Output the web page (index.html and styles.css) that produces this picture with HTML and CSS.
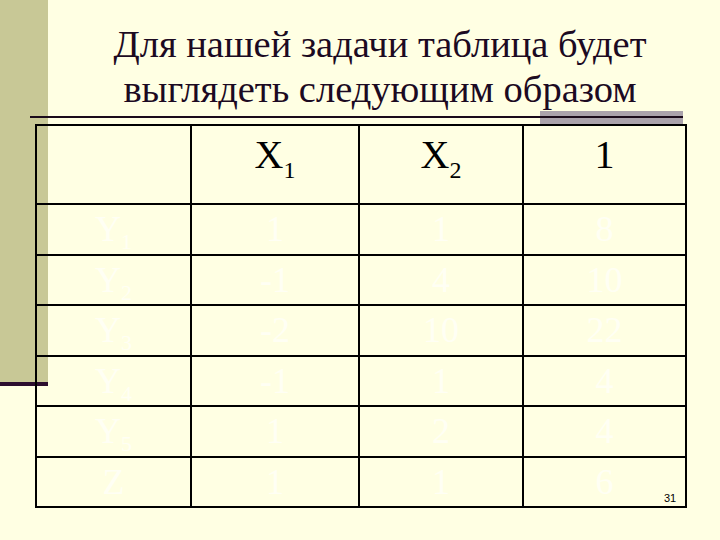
FILE: index.html
```html
<!DOCTYPE html>
<html lang="ru">
<head>
<meta charset="utf-8">
<title>Слайд 31</title>
<link rel="stylesheet" href="styles.css">
</head>
<body>
<div class="slide">
  <h1 class="title">Для нашей задачи таблица будет<br>выглядеть следующим образом</h1>
  <div class="rule"></div>
  <table class="grid">
    <colgroup>
      <col class="c0"><col class="c1"><col class="c2"><col class="c3">
    </colgroup>
    <thead>
      <tr class="head">
        <th></th>
        <th>X<sub>1</sub></th>
        <th>X<sub>2</sub></th>
        <th>1</th>
      </tr>
    </thead>
    <tbody>
      <tr><td>Y<sub>1</sub></td><td>1</td><td>1</td><td>8</td></tr>
      <tr><td>Y<sub>2</sub></td><td>-1</td><td>4</td><td>10</td></tr>
      <tr><td>Y<sub>3</sub></td><td>-2</td><td>10</td><td>22</td></tr>
      <tr><td>Y<sub>4</sub></td><td>-1</td><td>1</td><td>4</td></tr>
      <tr><td>Y<sub>5</sub></td><td>1</td><td>2</td><td>4</td></tr>
      <tr><td>Z</td><td>1</td><td>1</td><td>6</td></tr>
    </tbody>
  </table>
  <div class="pagenum">31</div>
</div>
</body>
</html>
```
FILE: styles.css
```css
html, body {
  margin: 0;
  padding: 0;
}
body {
  background: #ffffe3;
}
.slide {
  position: relative;
  z-index: 0;
  width: 720px;
  height: 540px;
  overflow: hidden;
  box-sizing: border-box;
  padding-top: 22px;
  background:
    linear-gradient(#c8c896, #c8c896) 0 0 / 48px 382px no-repeat,
    linear-gradient(#2c0d2e, #2c0d2e) 0 382px / 48px 4px no-repeat,
    #ffffe3;
  font-family: "Liberation Serif", "DejaVu Serif", serif;
}
.title {
  margin: 0;
  padding: 0 8px 0 48px;
  text-align: center;
  font-family: "Liberation Serif", "DejaVu Serif", serif;
  font-weight: normal;
  font-size: 38.5px;
  line-height: 45px;
  color: #1c0a22;
}
.rule {
  position: relative;
  margin: 4px 0 0 30px;
  width: 653px;
  height: 2px;
  background: #1a0a1a;
}
.rule::after {
  content: "";
  position: absolute;
  left: 510px;
  top: -5px;
  width: 143px;
  height: 13px;
  background: #aaa2ab;
  z-index: -1;
}
.grid {
  margin: 6px 0 0 35px;
  border-collapse: collapse;
  table-layout: fixed;
  width: 650px;
  font-family: "Liberation Serif", "DejaVu Serif", serif;
}
.c0 { width: 155px; }
.c1 { width: 168px; }
.c2 { width: 164px; }
.c3 { width: 163px; }
.grid th, .grid td {
  border: 2.5px solid #000;
  padding: 0;
  text-align: center;
  font-weight: normal;
  color: #000;
}
.head th {
  height: 79px;
  vertical-align: top;
  font-size: 40px;
  line-height: 40px;
  padding-top: 9px;
  box-sizing: border-box;
}
.head sub {
  font-size: 24px;
  vertical-align: -10px;
  line-height: 0;
}
.grid td {
  height: 48px;
  font-size: 36px;
  line-height: 40px;
  color: #fffff4;
}
.grid tbody tr {
  height: 50.5px;
}
.grid td sub {
  font-size: 22px;
  line-height: 0;
}
.pagenum {
  position: absolute;
  left: 664px;
  top: 492px;
  font-family: "Liberation Sans", Arial, sans-serif;
  font-size: 11px;
  color: #000;
}
```
